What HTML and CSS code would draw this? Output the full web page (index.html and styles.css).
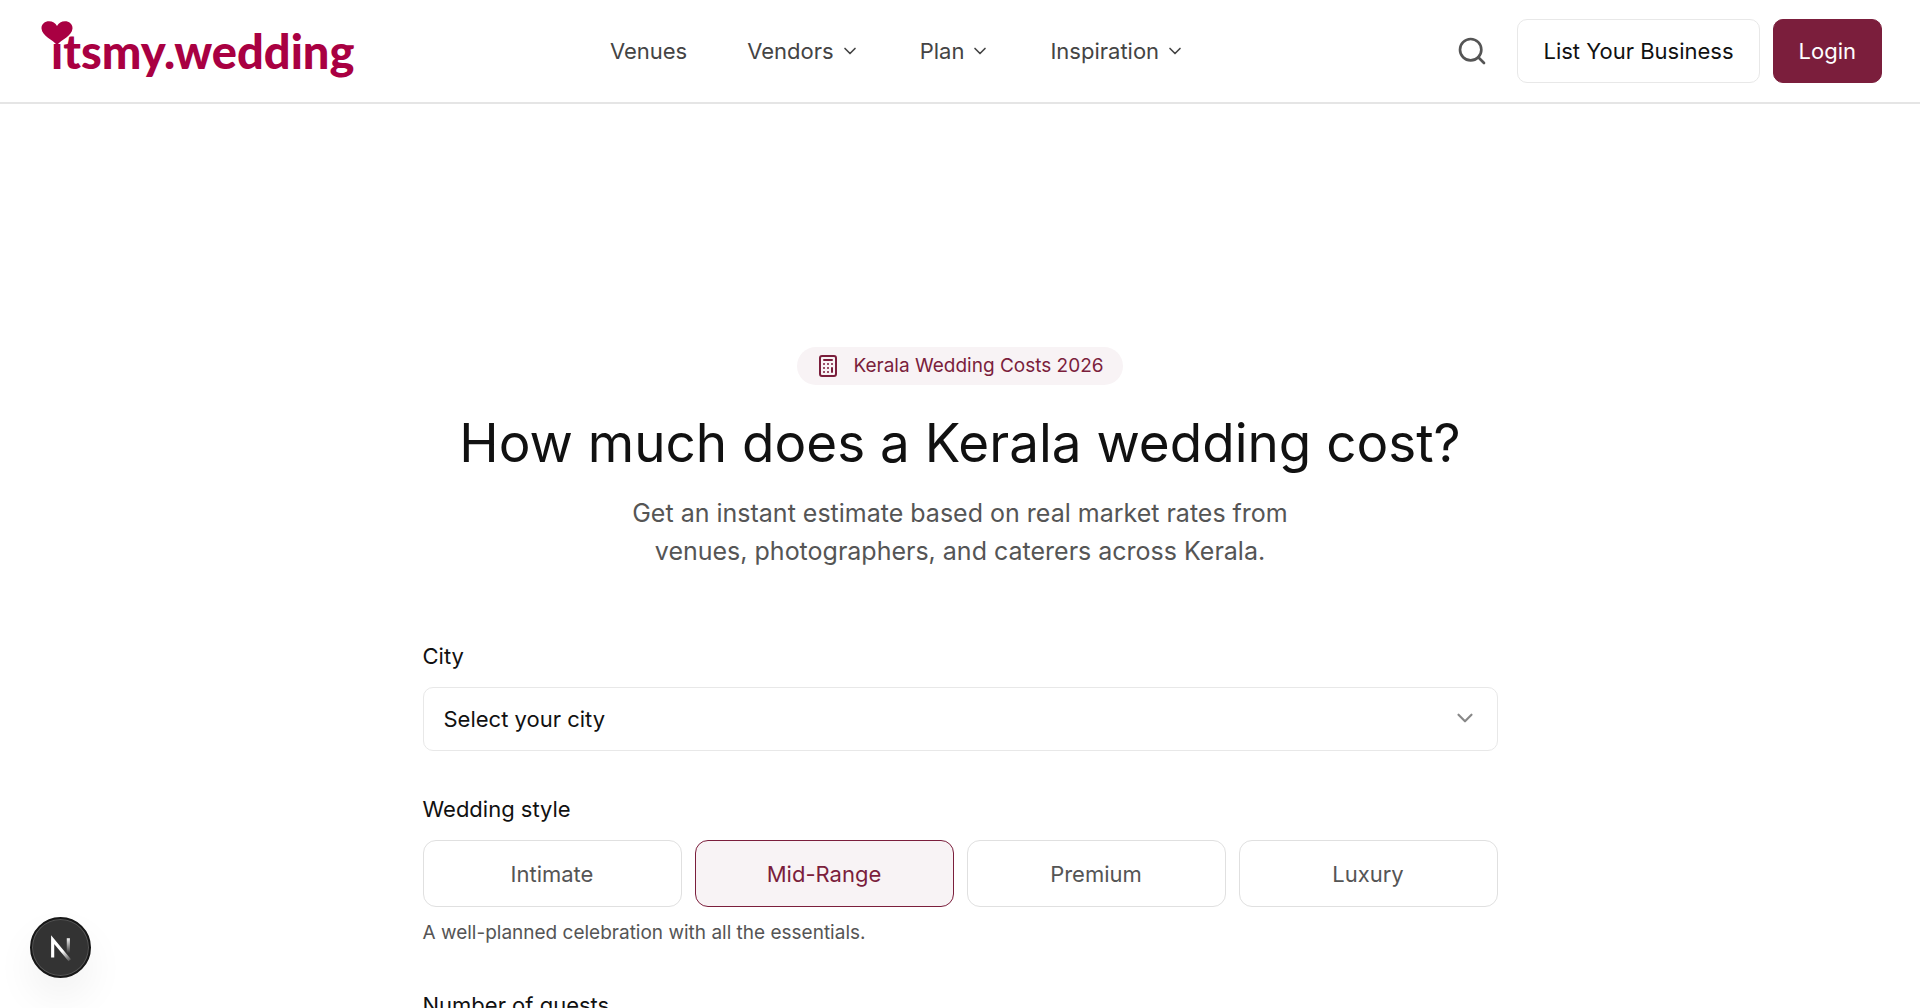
FILE: index.html
```
<!DOCTYPE html>
<html lang="en">
<head>
    <meta charset="UTF-8">
    <meta name="viewport" content="width=device-width, initial-scale=1.0">
    <title>Kerala Wedding Cost Calculator</title>
    <link rel="stylesheet" href="styles.css">
</head>
<body>
    <header class="site-header">
        <a class="logo" href="#">
            <svg class="logo-heart" viewBox="0 0 32 24" aria-hidden="true">
                <path d="M16 24C12 19 1 15 0.500 7.500C0.300 3 4 0.300 8 0.300C11.500 0.300 14.500 2 16 5C17.500 2 20.500 0.300 24 0.300C28 0.300 31.700 3 31.500 7.500C31 15 20 19 16 24Z"/>
            </svg>
            itsmy.wedding
        </a>

        <nav class="main-nav">
            <a class="nav-item" href="#">Venues</a>
            <button class="nav-item" type="button">Vendors
                <svg class="chevron" viewBox="0 0 24 24"><path d="m6 9 6 6 6-6"/></svg>
            </button>
            <button class="nav-item" type="button">Plan
                <svg class="chevron" viewBox="0 0 24 24"><path d="m6 9 6 6 6-6"/></svg>
            </button>
            <button class="nav-item" type="button">Inspiration
                <svg class="chevron" viewBox="0 0 24 24"><path d="m6 9 6 6 6-6"/></svg>
            </button>
        </nav>

        <div class="header-actions">
            <button class="search-btn" type="button" aria-label="Search">
                <svg viewBox="0 0 24 24"><circle cx="11" cy="11" r="8"/><path d="m21 21-4.300-4.300"/></svg>
            </button>
            <a class="btn btn-outline" href="#">List Your Business</a>
            <a class="btn btn-primary" href="#">Login</a>
        </div>
    </header>

    <main class="calculator">
        <section class="intro">
            <div class="badge">
                <svg viewBox="0 0 24 24" aria-hidden="true">
                    <rect x="4" y="2" width="16" height="20" rx="2"/>
                    <path d="M8 6h8M16 14v4M16 10h.01M12 10h.01M8 10h.01M12 14h.01M8 14h.01M12 18h.01M8 18h.01"/>
                </svg>
                Kerala Wedding Costs 2026
            </div>
            <h1>How much does a Kerala wedding cost?</h1>
            <p>Get an instant estimate based on real market rates from<br>venues, photographers, and caterers across Kerala.</p>
        </section>

        <form class="cost-form">
            <div class="field">
                <label for="city">City</label>
                <div class="select-wrap">
                    <select id="city">
                        <option>Select your city</option>
                    </select>
                    <svg class="select-chevron" viewBox="0 0 24 24" aria-hidden="true"><path d="m6 9 6 6 6-6"/></svg>
                </div>
            </div>

            <div class="field" role="group" aria-labelledby="style-label">
                <span class="field-label" id="style-label">Wedding style</span>
                <div class="style-options">
                    <button class="style-option" type="button">Intimate</button>
                    <button class="style-option selected" type="button" aria-pressed="true">Mid-Range</button>
                    <button class="style-option" type="button">Premium</button>
                    <button class="style-option" type="button">Luxury</button>
                </div>
                <p class="hint">A well-planned celebration with all the essentials.</p>
            </div>

            <div class="field">
                <label for="guests">Number of guests</label>
                <input id="guests" type="range" min="50" max="1000">
            </div>
        </form>
    </main>

    <button class="dev-badge" type="button" aria-label="Open dev tools">
        <svg viewBox="0 0 40 40" fill="none">
            <defs>
                <linearGradient id="fade-diagonal" x1="22" y1="22" x2="28" y2="30" gradientUnits="userSpaceOnUse">
                    <stop stop-color="#fff"/>
                    <stop offset="1" stop-color="#fff" stop-opacity="0"/>
                </linearGradient>
                <linearGradient id="fade-stem" x1="26" y1="13" x2="26" y2="24" gradientUnits="userSpaceOnUse">
                    <stop stop-color="#fff"/>
                    <stop offset="1" stop-color="#fff" stop-opacity="0"/>
                </linearGradient>
            </defs>
            <path d="M14.500 27V14.500L26.500 29" stroke="url(#fade-diagonal)" stroke-width="2.200"/>
            <path d="M25.500 13.500V24" stroke="url(#fade-stem)" stroke-width="2.200"/>
        </svg>
    </button>
</body>
</html>
```
FILE: styles.css
```
* {
    box-sizing: border-box;
}

body {
    margin: 0;
    height: 100vh;
    overflow: hidden;
    background: #fff;
    color: #111;
    font-family: Inter, "Liberation Sans", sans-serif;
    font-size: 22px;
    line-height: 32px;
}

a {
    color: inherit;
    text-decoration: none;
}

button,
select {
    font: inherit;
    color: inherit;
    cursor: pointer;
}

svg {
    fill: none;
    stroke: currentColor;
    stroke-width: 2;
    stroke-linecap: round;
    stroke-linejoin: round;
}

/* Header */
.site-header {
    display: flex;
    align-items: center;
    justify-content: space-between;
    padding: 19px 38px;
    border-bottom: 2px solid #e5e5e5;
}

.logo {
    position: relative;
    padding-left: 13px;
    color: #a90042;
    font-family: Lato, sans-serif;
    font-size: 47px;
    font-weight: 900;
    line-height: 64px;
}

.logo-heart {
    position: absolute;
    left: 3px;
    top: 2px;
    width: 32px;
    height: 24px;
    fill: currentColor;
    stroke: none;
}

.main-nav {
    display: flex;
    align-items: center;
    gap: 60px;
    color: #444;
}

.nav-item {
    display: flex;
    align-items: center;
    gap: 6px;
    padding: 0;
    border: 0;
    background: none;
}

.chevron {
    width: 20px;
    height: 20px;
}

.header-actions {
    display: flex;
    align-items: center;
    justify-content: flex-end;
    gap: 13px;
}

.search-btn {
    display: flex;
    padding: 16px;
    border: 0;
    background: none;
    color: #555;
}

.search-btn svg {
    width: 32px;
    height: 32px;
}

.btn {
    padding: 15px 25px;
    border: 1px solid #e8e8e8;
    border-radius: 10px;
}

.btn-primary {
    border-color: #7b1e3c;
    background: #7b1e3c;
    color: #fff;
}

/* Intro */
.calculator {
    max-width: 1075px;
    margin: 0 auto;
    padding-top: 243px;
}

.intro {
    display: flex;
    flex-direction: column;
    align-items: center;
    text-align: center;
}

.badge {
    display: flex;
    align-items: center;
    gap: 13px;
    padding: 3px 19px;
    border-radius: 20px;
    background: #f8f3f5;
    color: #7b1e3c;
    font-size: 19px;
}

.badge svg {
    width: 24px;
    height: 24px;
}

.intro h1 {
    margin: 26px 0 19px;
    font-size: 53px;
    font-weight: 400;
    line-height: 64px;
}

.intro p {
    margin: 0;
    color: #555;
    font-size: 25px;
    line-height: 38px;
}

/* Form */
.cost-form {
    display: flex;
    flex-direction: column;
    gap: 42px;
    margin-top: 70px;
}

.field {
    display: flex;
    flex-direction: column;
}

.field label,
.field-label {
    margin-bottom: 15px;
}

.select-wrap {
    position: relative;
}

.select-wrap select {
    width: 100%;
    height: 64px;
    padding: 0 60px 0 20px;
    border: 1px solid #e8e8e8;
    border-radius: 10px;
    background: #fff;
    appearance: none;
}

.select-chevron {
    position: absolute;
    right: 20px;
    top: 18px;
    width: 26px;
    height: 26px;
    color: #888;
    pointer-events: none;
}

.style-options {
    display: grid;
    grid-template-columns: repeat(4, 1fr);
    gap: 13px;
}

.style-option {
    height: 67px;
    border: 1px solid #e0e0e0;
    border-radius: 13px;
    background: #fff;
    color: #555;
}

.style-option.selected {
    border-color: #7b1e3c;
    background: #f8f3f5;
    color: #7b1e3c;
}

.hint {
    margin: 11px 0 0;
    color: #555;
    font-size: 19px;
    line-height: 29px;
}

/* Floating badge */
.dev-badge {
    position: fixed;
    left: 30px;
    bottom: 30px;
    display: flex;
    width: 61px;
    height: 61px;
    padding: 0;
    border: 2px solid #171717;
    border-radius: 50%;
    background: #333;
    box-shadow: inset 0 0 0 1px #555, 0 20px 40px rgba(0, 0, 0, 0.06);
}

.dev-badge svg {
    width: 100%;
    height: 100%;
    stroke-linecap: butt;
    stroke-linejoin: miter;
}
```
